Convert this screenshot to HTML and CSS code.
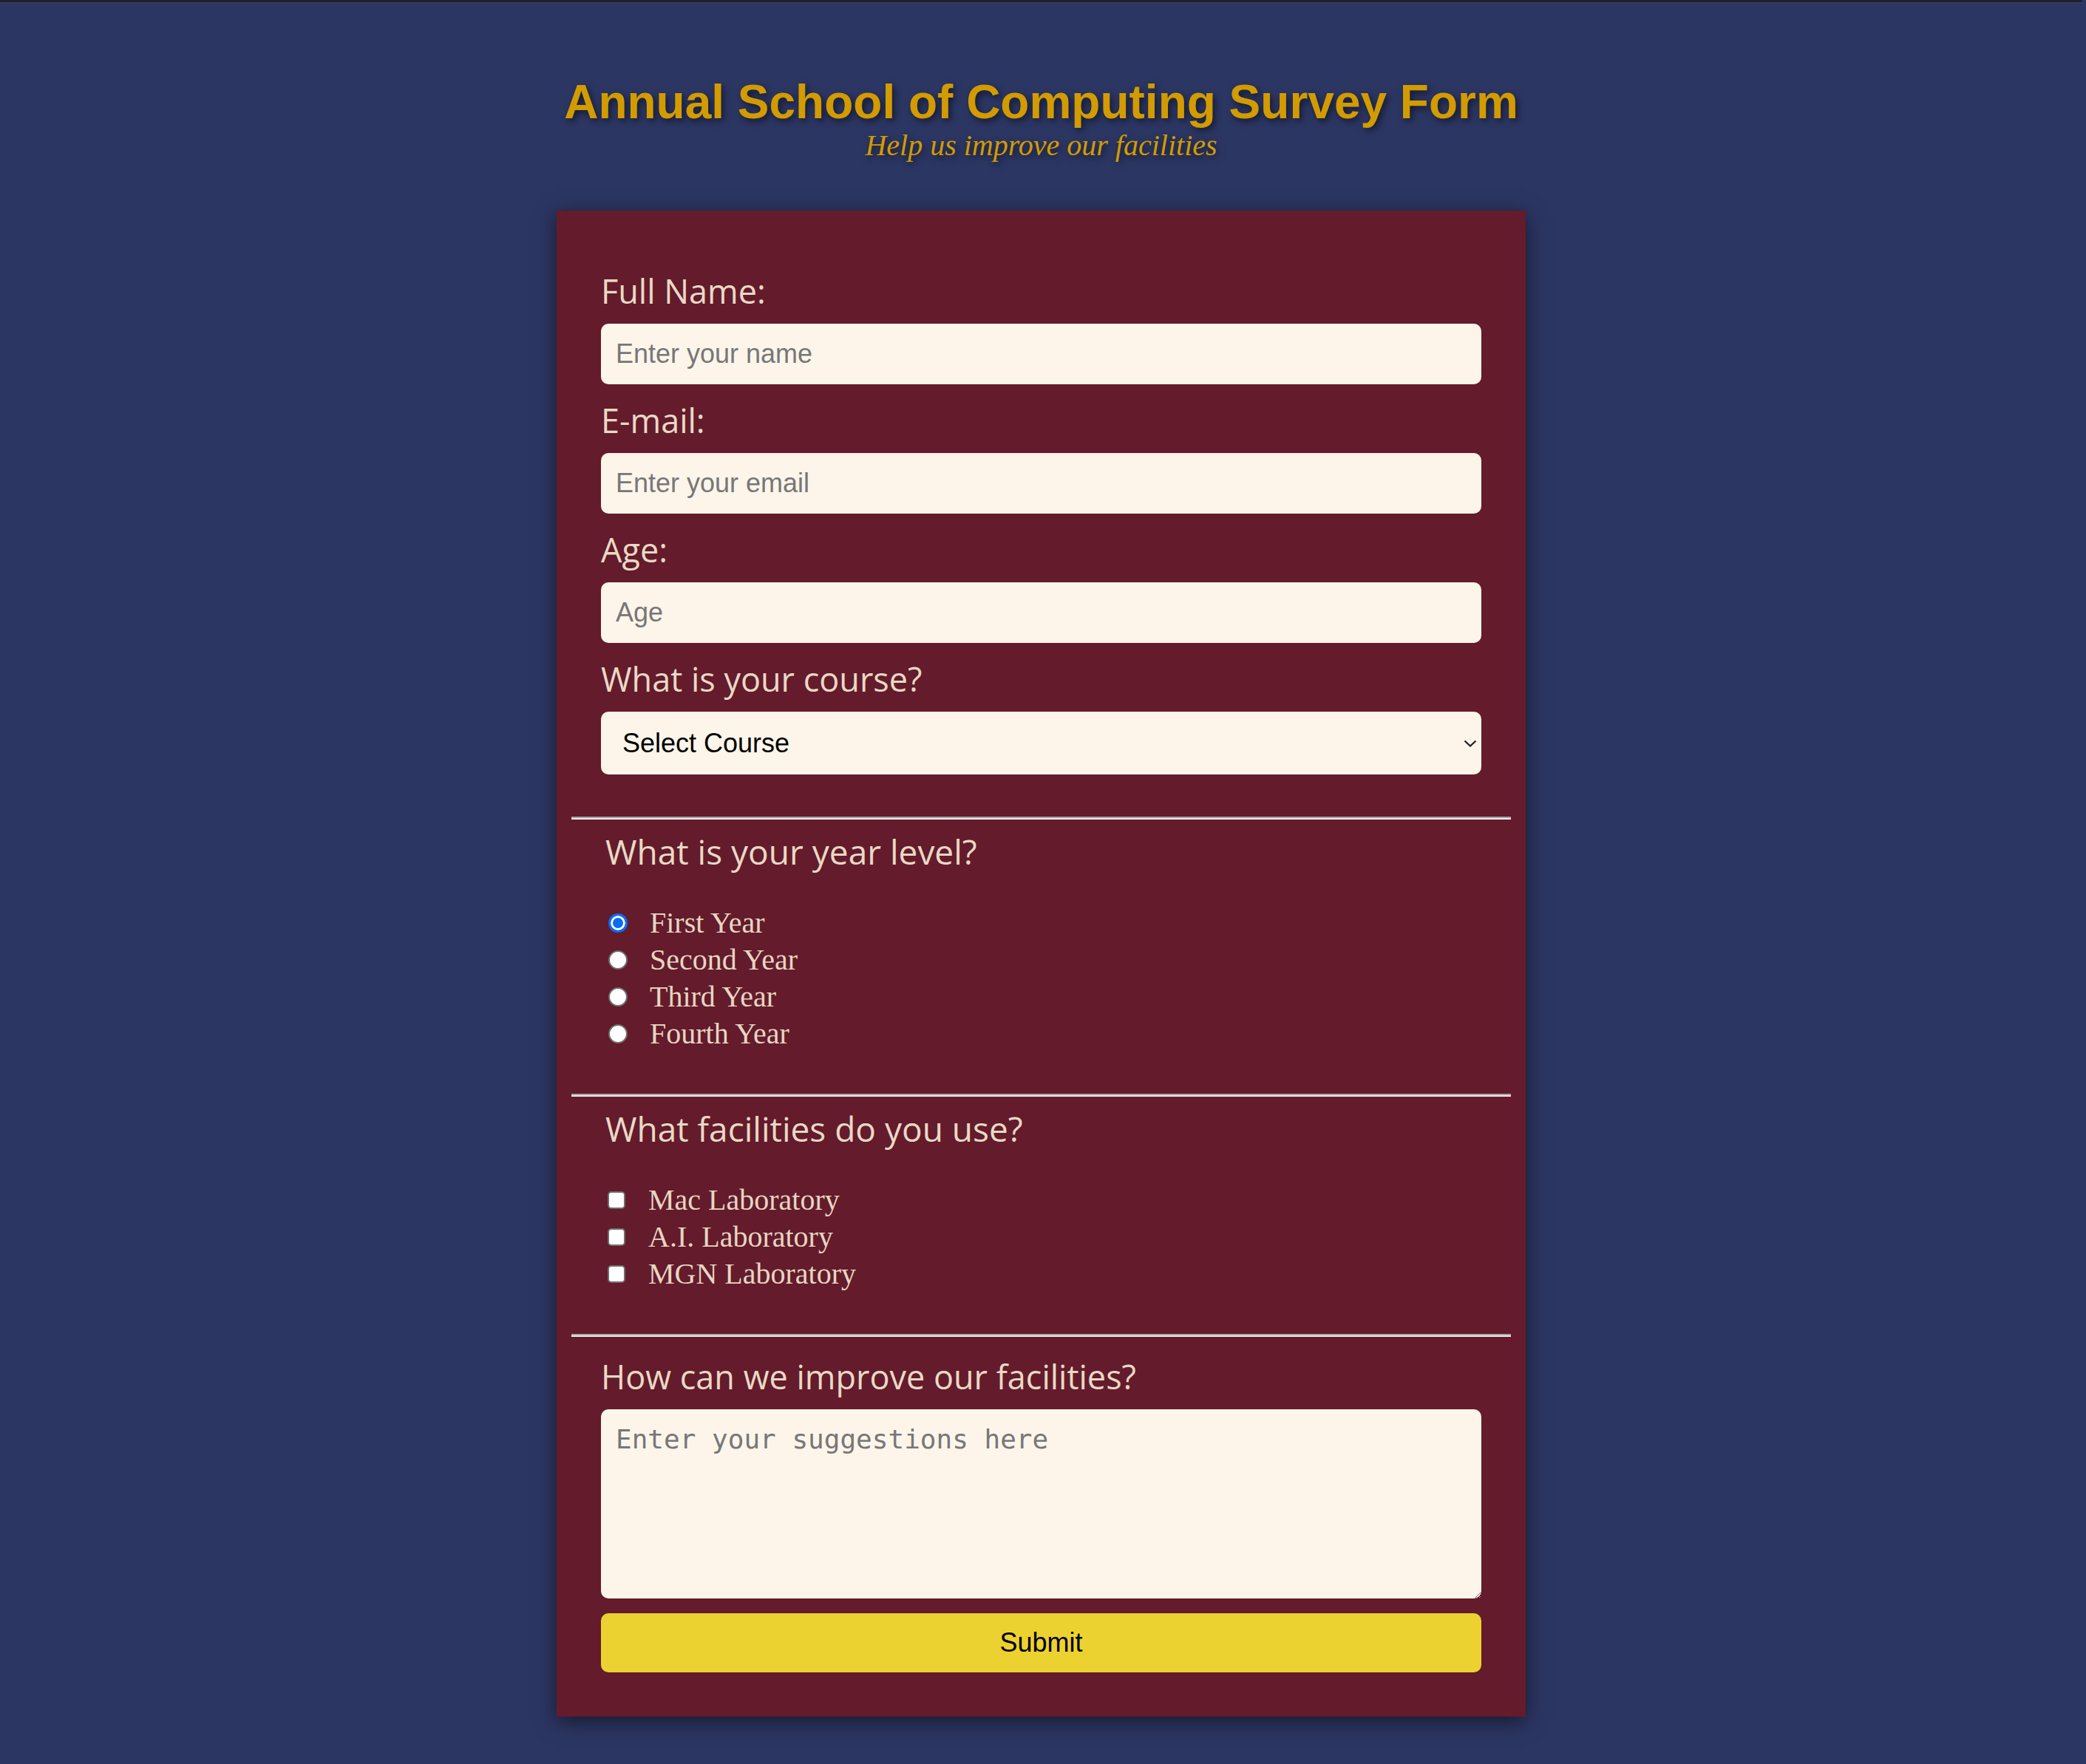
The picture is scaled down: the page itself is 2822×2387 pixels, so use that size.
FILE: index.html
```html
<!DOCTYPE html>
<html lang="en">
<head>
<meta charset="utf-8">
<title>Annual School of Computing Survey Form</title>
<link rel="stylesheet" href="styles.css">
</head>
<body>
<div class="topline"></div>
<header class="masthead">
  <h1 class="title">Annual School of Computing Survey Form</h1>
  <p class="subtitle">Help us improve our facilities</p>
</header>
<form class="card">
  <div class="fields">
    <div class="field">
      <label class="label" for="name">Full Name:</label>
      <input class="text-input" id="name" type="text" placeholder="Enter your name">
    </div>
    <div class="field">
      <label class="label" for="email">E-mail:</label>
      <input class="text-input" id="email" type="email" placeholder="Enter your email">
    </div>
    <div class="field">
      <label class="label" for="age">Age:</label>
      <input class="text-input" id="age" type="number" placeholder="Age">
    </div>
    <div class="field">
      <label class="label" for="course">What is your course?</label>
      <div class="select-wrap">
        <select class="select" id="course">
          <option>Select Course</option>
        </select>
        <svg class="chev" width="18" height="10" viewBox="0 0 18 10"><path d="M1.5 1.5 L9 8.5 L16.5 1.5" fill="none" stroke="#1c1c1c" stroke-width="2.2"/></svg>
      </div>
    </div>
  </div>
  <hr class="divider">
  <div class="choice-group">
    <p class="legend">What is your year level?</p>
    <div class="options">
      <label class="option"><input class="radio" type="radio" name="year" checked><span class="option-text">First Year</span></label>
      <label class="option"><input class="radio" type="radio" name="year"><span class="option-text">Second Year</span></label>
      <label class="option"><input class="radio" type="radio" name="year"><span class="option-text">Third Year</span></label>
      <label class="option"><input class="radio" type="radio" name="year"><span class="option-text">Fourth Year</span></label>
    </div>
  </div>
  <hr class="divider">
  <div class="choice-group">
    <p class="legend">What facilities do you use?</p>
    <div class="options">
      <label class="option"><input class="check" type="checkbox"><span class="option-text">Mac Laboratory</span></label>
      <label class="option"><input class="check" type="checkbox"><span class="option-text">A.I. Laboratory</span></label>
      <label class="option"><input class="check" type="checkbox"><span class="option-text">MGN Laboratory</span></label>
    </div>
  </div>
  <hr class="divider">
  <div class="final">
    <label class="label" for="suggest">How can we improve our facilities?</label>
    <textarea class="textarea" id="suggest" placeholder="Enter your suggestions here"></textarea>
    <button class="submit" type="button">Submit</button>
  </div>
</form>
</body>
</html>
```
FILE: styles.css
```css
html {
  background: #2c3663;
}

body {
  margin: 0;
  padding: 0 5px 0 0;
  min-height: 2387px;
  box-sizing: border-box;
  background: #2c3663;
  font-family: "Liberation Sans", Arial, sans-serif;
}

.topline {
  height: 2px;
  border-top: 3px solid #1f1f33;
  background: #393b57;
}

.masthead {
  padding-top: 96px;
  text-align: center;
  text-shadow: 3px 4px 10px rgba(0, 0, 0, 0.55);
}

.title {
  margin: 0;
  font: bold 64px/74px "Liberation Sans", Arial, sans-serif;
  color: #d29b02;
}

.subtitle {
  margin: 0;
  font: italic 40px/44px "Liberation Serif", "Times New Roman", serif;
  color: #d29b02;
}

.card {
  width: 1311px;
  box-sizing: border-box;
  margin: 66px auto 0;
  padding: 86px 60px 60px;
  background: #641b2b;
  box-shadow: 0 6px 26px rgba(0, 0, 0, 0.55);
}

.fields {
  display: flex;
  flex-direction: column;
  gap: 26px;
  padding-bottom: 57px;
}

.field {
  display: flex;
  flex-direction: column;
}

.label {
  display: block;
  margin-bottom: 21px;
  font: 45px/46px "Open Sans", "DejaVu Sans", sans-serif;
  color: #e9d9c6;
}

.text-input {
  height: 82px;
  box-sizing: border-box;
  padding: 0 20px;
  border: none;
  border-radius: 10px;
  background: #fdf5ea;
  font: 36px "Liberation Sans", Arial, sans-serif;
  color: #222;
  outline: none;
}

.text-input::placeholder,
.textarea::placeholder {
  color: #777;
}

.select-wrap {
  position: relative;
}

.select {
  display: block;
  width: 100%;
  height: 85px;
  box-sizing: border-box;
  padding: 0 60px 0 29px;
  border: none;
  border-radius: 10px;
  background: #fdf5ea;
  font: 36px "Liberation Sans", Arial, sans-serif;
  color: #000;
  appearance: none;
  -webkit-appearance: none;
  outline: none;
}

.chev {
  position: absolute;
  right: 6px;
  top: 50%;
  margin-top: -5px;
}

.divider {
  height: 0;
  margin: 0 -40px;
  border: 0;
  border-top: 2px solid #a6a6a6;
  border-bottom: 2px solid #ececec;
}

.choice-group {
  padding: 16px 0 56px;
}

.legend {
  margin: 0 0 0 6px;
  font: 46px/54px "Open Sans", "DejaVu Sans", sans-serif;
  color: #e9d9c6;
}

.options {
  margin-top: 45px;
  display: flex;
  flex-direction: column;
}

.option {
  display: flex;
  align-items: center;
  height: 50px;
}

.option-text {
  font: 40px/50px "Liberation Serif", "Times New Roman", serif;
  color: #e6d6c3;
}

.radio {
  appearance: none;
  -webkit-appearance: none;
  width: 26px;
  height: 26px;
  box-sizing: border-box;
  margin: 0 30px 0 10px;
  border: 2.5px solid #6d6d6d;
  border-radius: 50%;
  background: #fff;
}

.radio:checked {
  border: 3px solid #0a6cf5;
  background: #0a6cf5;
  box-shadow: inset 0 0 0 3px #fff;
}

.check {
  appearance: none;
  -webkit-appearance: none;
  width: 24px;
  height: 24px;
  box-sizing: border-box;
  margin: 0 31px 0 9px;
  border: 2.5px solid #6d6d6d;
  border-radius: 5px;
  background: #fff;
}

.final {
  padding-top: 31px;
  display: flex;
  flex-direction: column;
}

.textarea {
  display: block;
  height: 256px;
  box-sizing: border-box;
  padding: 20px;
  border: none;
  border-radius: 10px;
  background: #fdf5ea;
  font: 36px/42px "DejaVu Sans Mono", monospace;
  color: #222;
  outline: none;
}

.submit {
  margin-top: 20px;
  height: 80px;
  border: none;
  border-radius: 10px;
  background: #ecd230;
  font: 36px "Liberation Sans", Arial, sans-serif;
  color: #000;
}
```
